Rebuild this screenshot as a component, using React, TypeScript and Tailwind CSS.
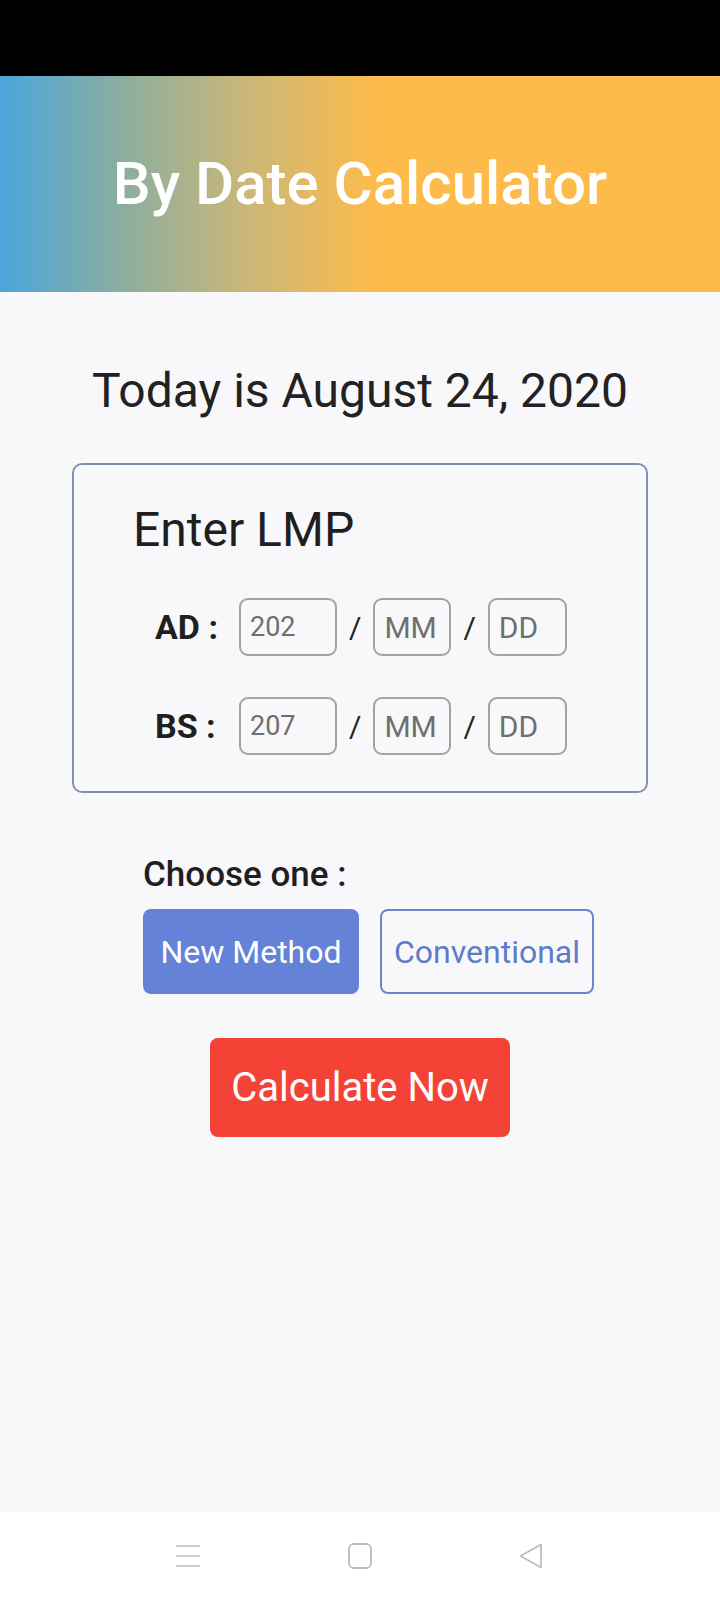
import { useState } from "react";

function DateBox({ placeholder, width, size }: { placeholder: string; width: string; size: string }) {
  return (
    <div
      className={`flex h-[58px] items-center rounded-[9px] border-2 border-[#a3a3a3] pl-[9px] text-[#6f6f6f] ${width} ${size}`}
    >
      {placeholder}
    </div>
  );
}

function DateRow({ label, year }: { label: string; year: string }) {
  return (
    <div className="flex items-center">
      <div className="w-[84px] text-[34px] font-bold leading-none text-[#1f1f1f]">{label}</div>
      <DateBox placeholder={year} width="w-[98px]" size="text-[27px]" />
      <span className="mx-[12px] text-[30px] text-[#222]">/</span>
      <DateBox placeholder="MM" width="w-[78px]" size="text-[30px]" />
      <span className="mx-[12px] text-[30px] text-[#222]">/</span>
      <DateBox placeholder="DD" width="w-[79px]" size="text-[30px]" />
    </div>
  );
}

export default function App() {
  const [method, setMethod] = useState<"new" | "conv">("new");

  return (
    <div className="flex h-[1600px] w-[720px] flex-col font-['Roboto',sans-serif]">
      <div className="h-[76px] bg-black" />

      <div className="flex h-[216px] items-center justify-center bg-[linear-gradient(to_right,#4aa6dc_0%,#8fae9c_18%,#c9b779_34%,#fdbb4b_52%,#fdbb4b_100%)]">
        <h1 className="text-[60px] font-medium leading-none text-white">By Date Calculator</h1>
      </div>

      <div className="flex flex-1 flex-col bg-[#f8f8fa]">
        <div className="mt-[75px] text-center text-[48px] leading-none text-[#222]">Today is August 24, 2020</div>

        <div className="mx-[72px] mt-[48px] h-[330px] rounded-[10px] border-2 border-[#7f8fb6] pt-[41px]">
          <div className="pl-[59px] text-[48px] leading-none text-[#1f1f1f]">Enter LMP</div>
          <div className="mt-[44px] flex flex-col gap-[41px] pl-[81px]">
            <DateRow label="AD :" year="202" />
            <DateRow label="BS :" year="207" />
          </div>
        </div>

        <div className="ml-[143px] mt-[64px]">
          <div className="text-[35px] font-medium leading-none text-[#1f1f1f]">Choose one :</div>
          <div className="mt-[17px] flex gap-[21px]">
            <button
              onClick={() => setMethod("new")}
              className={`h-[85px] w-[216px] rounded-[8px] text-[32px] ${
                method === "new" ? "bg-[#6482d7] text-white" : "border-2 border-[#6f84c8] text-[#5d7cc8]"
              }`}
            >
              New Method
            </button>
            <button
              onClick={() => setMethod("conv")}
              className={`h-[85px] w-[214px] rounded-[8px] text-[32px] ${
                method === "conv" ? "bg-[#6482d7] text-white" : "border-2 border-[#6f84c8] text-[#5d7cc8]"
              }`}
            >
              Conventional
            </button>
          </div>
        </div>

        <button className="mx-auto mt-[44px] h-[99px] w-[300px] rounded-[8px] bg-[#f44336] text-[40px] text-white">
          Calculate Now
        </button>
      </div>

      <div className="flex h-[88px] items-center justify-between bg-white pl-[176px] pr-[177px]">
        <svg width="24" height="24" viewBox="0 0 24 24" fill="none" stroke="#bdbdbd" strokeWidth="1.6">
          <path d="M0 2h24M0 12h24M0 22h24" />
        </svg>
        <svg width="24" height="26" viewBox="0 0 24 26" fill="none" stroke="#bdbdbd" strokeWidth="1.8">
          <rect x="1" y="1" width="22" height="24" rx="5" />
        </svg>
        <svg width="24" height="26" viewBox="0 0 24 26" fill="none" stroke="#bdbdbd" strokeWidth="1.8" strokeLinejoin="round">
          <path d="M22 1.5v23L1.5 13z" />
        </svg>
      </div>
    </div>
  );
}
